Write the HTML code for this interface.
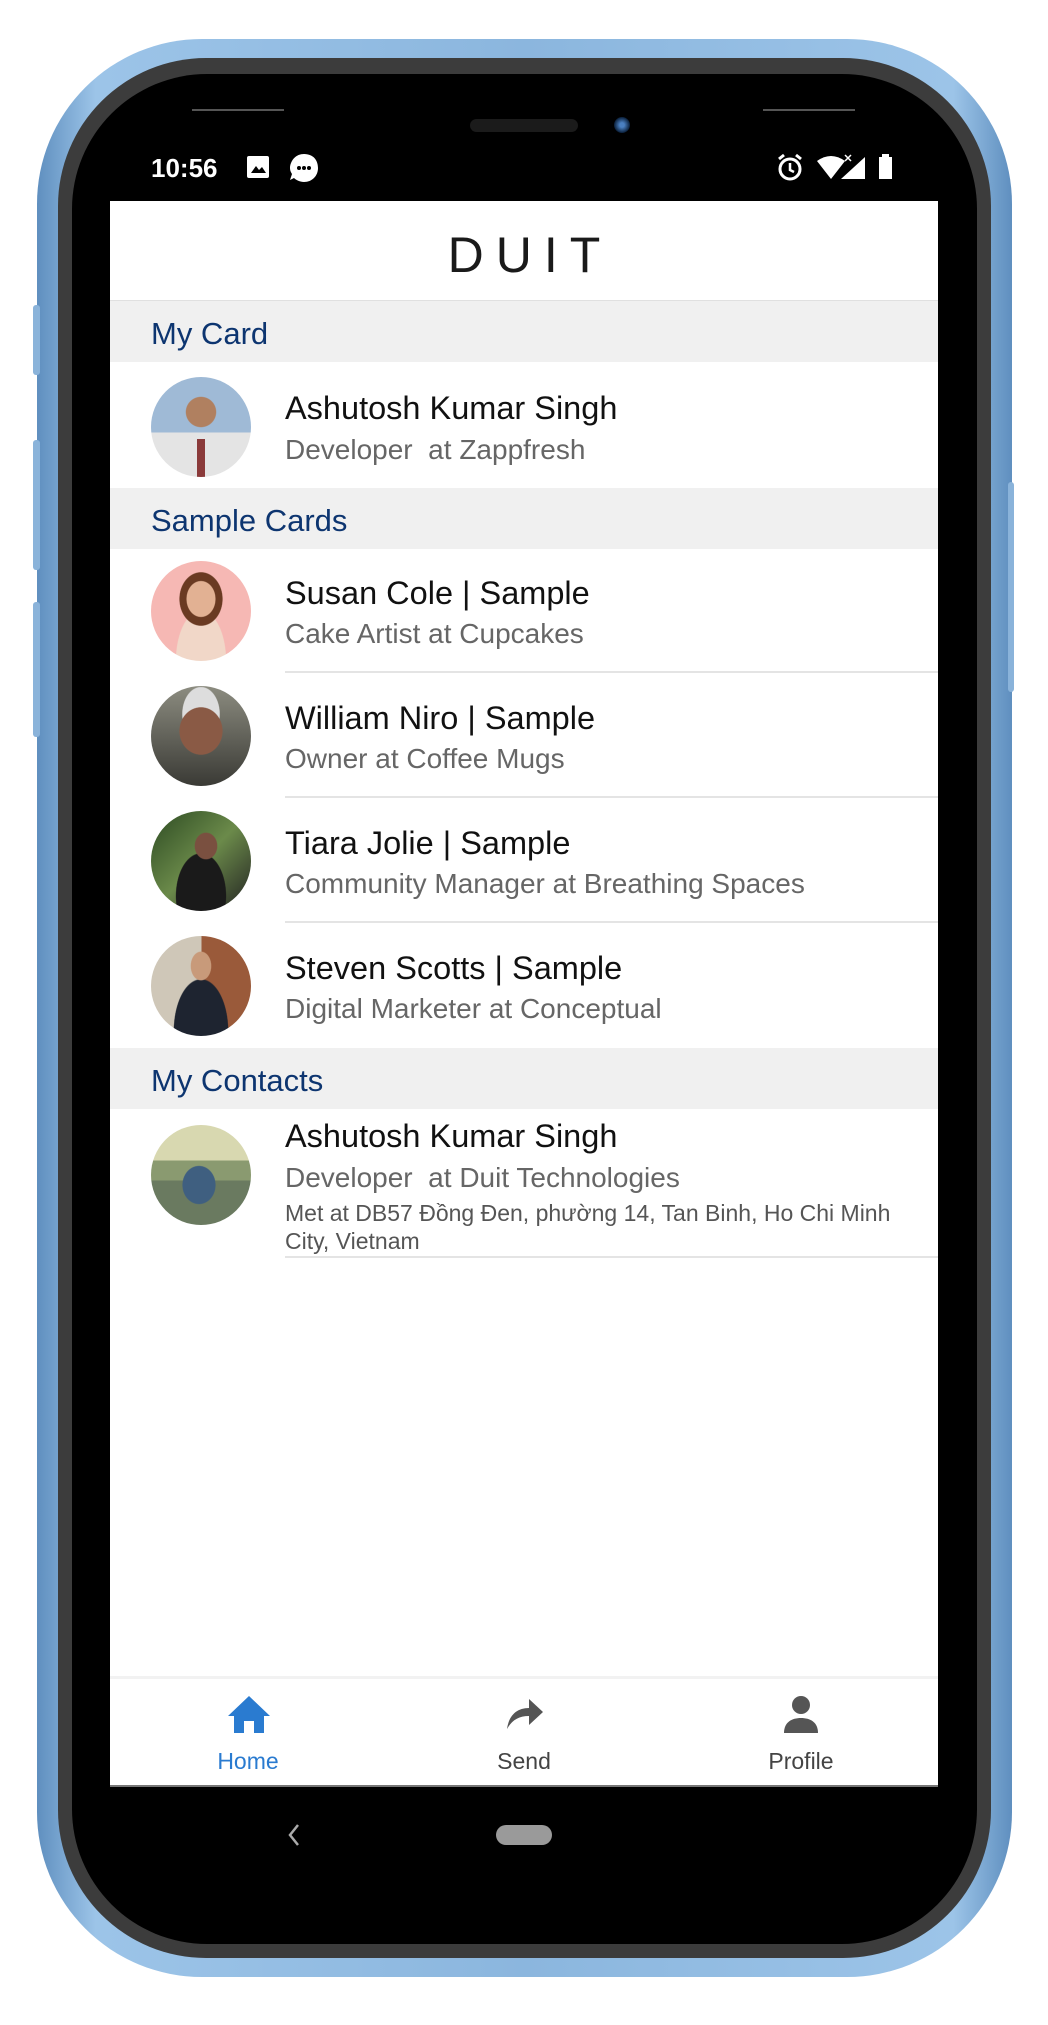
<!DOCTYPE html>
<html><head><meta charset="utf-8"><style>
*{margin:0;padding:0;box-sizing:border-box}
body{width:1048px;height:2025px;background:#fff;position:relative;overflow:hidden;font-family:"Liberation Sans","Noto Sans CJK SC",sans-serif}
.abs{position:absolute}
.t{position:absolute;white-space:nowrap;line-height:1}
.sec{position:absolute;left:110px;width:828px;height:61px;background:#f0f0f0}
.sec span{position:absolute;left:41px;top:15px;font-size:31px;color:#0d3570}
.name{font-size:32.5px;color:#111;left:285px}
.sub{font-size:28px;color:#666;left:285px}
.sep{position:absolute;left:285px;width:653px;height:2px;background:#e4e4e4}
.av{position:absolute;left:151px;width:100px;height:100px;border-radius:50%;overflow:hidden}
</style></head><body>
<!-- phone frame -->
<div class="abs" style="left:37px;top:39px;width:975px;height:1938px;border-radius:165px;background:linear-gradient(90deg,#5f8fbf,#9cc4e8 6%,#8bb6de 50%,#9cc4e8 94%,#5f8fbf);"></div>
<div class="abs" style="left:33px;top:305px;width:7px;height:70px;background:#8ab3da;border-radius:3px"></div>
<div class="abs" style="left:33px;top:440px;width:7px;height:130px;background:#8ab3da;border-radius:3px"></div>
<div class="abs" style="left:33px;top:602px;width:7px;height:135px;background:#8ab3da;border-radius:3px"></div>
<div class="abs" style="left:1008px;top:482px;width:6px;height:210px;background:#8ab3da;border-radius:3px"></div>
<div class="abs" style="left:58px;top:58px;width:933px;height:1900px;border-radius:148px;background:#3c3c3c"></div>
<div class="abs" style="left:72px;top:74px;width:905px;height:1870px;border-radius:135px;background:#000"></div>
<div class="abs" style="left:192px;top:109px;width:92px;height:2px;background:#555"></div>
<div class="abs" style="left:763px;top:109px;width:92px;height:2px;background:#555"></div>
<div class="abs" style="left:470px;top:119px;width:108px;height:13px;border-radius:7px;background:#1b1b1b"></div>
<div class="abs" style="left:614px;top:117px;width:16px;height:16px;border-radius:50%;background:radial-gradient(circle,#4a7fc0 20%,#0a1f3a 70%)"></div>
<!-- status bar -->
<div class="t" style="left:151px;top:155px;font-size:26px;color:#fff;font-weight:bold">10:56</div>
<div class="abs" style="left:247px;top:156px;width:22px;height:22px;background:#fff;border-radius:2px"><svg width="22" height="22"><path d="M4 17 L9 10 L12 14 L15 11 L19 17Z" fill="#000"/></svg></div>
<svg class="abs" style="left:288px;top:152px" width="32" height="32"><path d="M16 2 C26 2 30 9 30 16 C30 24 24 30 16 30 C12 30 8 28 6 26 L2 28 L4 22 C2 19 2 17 2 15 C3 8 8 2 16 2Z" fill="#fff"/><circle cx="11" cy="16" r="2" fill="#000"/><circle cx="16" cy="16" r="2" fill="#000"/><circle cx="21" cy="16" r="2" fill="#000"/></svg>
<svg class="abs" style="left:775px;top:153px" width="30" height="30"><circle cx="15" cy="16" r="10" fill="none" stroke="#fff" stroke-width="3"/><path d="M15 10v7l4 2" stroke="#fff" stroke-width="2.5" fill="none"/><path d="M4 6l5-4M26 6l-5-4" stroke="#fff" stroke-width="3"/></svg>
<svg class="abs" style="left:815px;top:153px" width="80" height="30"><path d="M2 8 Q16 -2 30 8 L16 26Z" fill="#fff"/><path d="M26 26 L50 4 L50 26Z" fill="#fff"/><path d="M30 2l6 6M36 2l-6 6" stroke="#fff" stroke-width="1.5"/><rect x="64" y="4" width="13" height="22" fill="#fff"/><rect x="67" y="1" width="7" height="4" fill="#fff"/></svg>
<!-- screen -->
<div class="abs" style="left:110px;top:201px;width:828px;height:1586px;background:#fff"></div>
<div class="t" style="left:110px;width:828px;text-align:center;top:230px;font-size:50px;letter-spacing:12px;text-indent:12px;color:#1a1a1a">DUIT</div>
<div class="abs" style="left:110px;top:300px;width:828px;height:2px;background:#e0e0e0"></div>

<div class="sec" style="top:301px"><span>My Card</span></div>
<div class="av" style="top:377px;background:radial-gradient(circle at 50% 35%,#b08060 0 18%,transparent 19%),linear-gradient(#9fbad6 0 55%,#e4e4e4 56%)"><div class="abs" style="left:46px;top:62px;width:8px;height:38px;background:#8a3a3a"></div></div>
<div class="t name" style="top:392px">Ashutosh Kumar Singh</div>
<div class="t sub" style="top:436px">Developer&nbsp; at Zappfresh</div>

<div class="sec" style="top:488px"><span>Sample Cards</span></div>

<div class="av" style="top:561px;background:radial-gradient(ellipse at 50% 38%,#e2b193 0 20%,#6a3a22 21% 30%,transparent 31%),radial-gradient(ellipse at 50% 100%,#f1d7c8 0 35%,transparent 36%),#f6b8b4"></div>
<div class="t name" style="top:577px">Susan Cole | Sample</div>
<div class="t sub" style="top:620px">Cake Artist at Cupcakes</div>
<div class="sep" style="top:671px"></div>

<div class="av" style="top:686px;background:radial-gradient(ellipse at 50% 45%,#8a5a45 0 30%,transparent 31%),radial-gradient(ellipse at 50% 28%,#ddd 0 26%,transparent 27%),linear-gradient(#8c8c80,#3a3a35)"></div>
<div class="t name" style="top:702px">William Niro | Sample</div>
<div class="t sub" style="top:745px">Owner at Coffee Mugs</div>
<div class="sep" style="top:796px"></div>

<div class="av" style="top:811px;background:radial-gradient(ellipse at 55% 35%,#7a5040 0 14%,transparent 15%),radial-gradient(ellipse at 50% 85%,#1a1a1a 0 35%,transparent 36%),linear-gradient(135deg,#2c4a22,#6b8a4a 50%,#222)"></div>
<div class="t name" style="top:827px">Tiara Jolie | Sample</div>
<div class="t sub" style="top:870px">Community Manager at Breathing Spaces</div>
<div class="sep" style="top:921px"></div>

<div class="av" style="top:936px;background:radial-gradient(ellipse at 50% 30%,#c89a7a 0 14%,transparent 15%),radial-gradient(ellipse at 50% 95%,#1e2430 0 38%,transparent 39%),linear-gradient(90deg,#cfc7b8 0 50%,#9a5a3a 51%)"></div>
<div class="t name" style="top:952px">Steven Scotts | Sample</div>
<div class="t sub" style="top:995px">Digital Marketer at Conceptual</div>

<div class="sec" style="top:1048px"><span>My Contacts</span></div>
<div class="av" style="top:1125px;background:radial-gradient(ellipse at 48% 60%,#3f5f80 0 22%,transparent 23%),linear-gradient(#d8d8b0 0 35%,#8a9a70 36% 55%,#6a7a60 56%)"></div>
<div class="t name" style="top:1120px">Ashutosh Kumar Singh</div>
<div class="t sub" style="top:1164px">Developer&nbsp; at Duit Technologies</div>
<div class="t" style="left:285px;top:1202px;font-size:23px;color:#555">Met at DB57 Đồng Đen, phường 14, Tan Binh, Ho Chi Minh</div>
<div class="t" style="left:285px;top:1230px;font-size:23px;color:#555">City, Vietnam</div>
<div class="sep" style="top:1256px"></div>

<!-- bottom nav -->
<div class="abs" style="left:110px;top:1676px;width:828px;height:3px;background:#f2f2f2"></div>
<svg class="abs" style="left:227px;top:1694px" width="44" height="40"><path d="M22 2 L43 22 L37 22 L37 39 L27 39 L27 27 L17 27 L17 39 L7 39 L7 22 L1 22Z" fill="#2a7bd0"/></svg>
<div class="t" style="left:198px;width:100px;text-align:center;top:1750px;font-size:23px;color:#2a7bd0">Home</div>
<svg class="abs" style="left:503px;top:1695px" width="42" height="36"><path d="M4 34 C6 20 14 13 26 13 L26 4 L40 17 L26 30 L26 21 C16 21 9 25 4 34Z" fill="#555"/></svg>
<div class="t" style="left:474px;width:100px;text-align:center;top:1750px;font-size:23px;color:#444">Send</div>
<svg class="abs" style="left:782px;top:1694px" width="38" height="40"><circle cx="19" cy="11" r="9" fill="#555"/><path d="M2 39 C2 28 10 24 19 24 C28 24 36 28 36 39Z" fill="#555"/></svg>
<div class="t" style="left:751px;width:100px;text-align:center;top:1750px;font-size:23px;color:#444">Profile</div>
<div class="abs" style="left:110px;top:1785px;width:828px;height:2px;background:#777"></div>
<!-- system nav -->
<svg class="abs" style="left:286px;top:1822px" width="16" height="26"><path d="M12 3 L4 13 L12 23" stroke="#aaa" stroke-width="2.5" fill="none"/></svg>
<div class="abs" style="left:496px;top:1825px;width:56px;height:20px;border-radius:10px;background:#9a9a9a"></div>
</body></html>
